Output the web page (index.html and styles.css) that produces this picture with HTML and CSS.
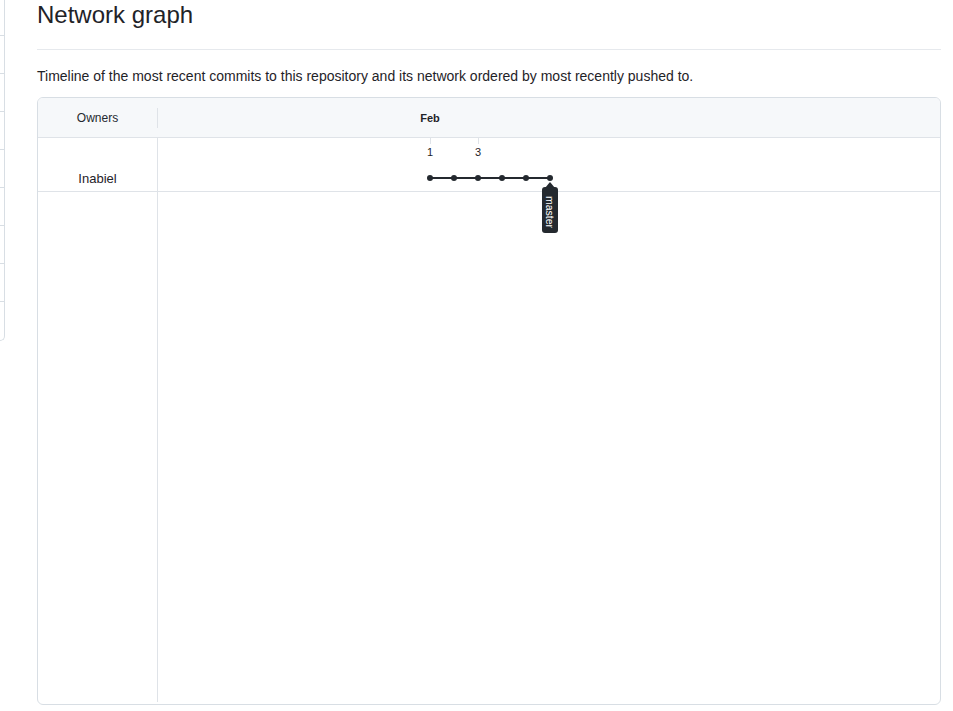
FILE: index.html
```html
<!DOCTYPE html>
<html lang="en">
<head>
<meta charset="utf-8">
<title>Network graph</title>
<link rel="stylesheet" href="styles.css">
</head>
<body>
<div class="page">
  <aside class="sidebar">
    <div class="side-item"></div>
    <div class="side-item"></div>
    <div class="side-item"></div>
    <div class="side-item"></div>
    <div class="side-item"></div>
    <div class="side-item"></div>
    <div class="side-item"></div>
    <div class="side-item"></div>
    <div class="side-item last"></div>
  </aside>
  <main class="main">
    <h2 class="title">Network graph</h2>
    <p class="lead">Timeline of the most recent commits to this repository and its network ordered by most recently pushed to.</p>
    <div class="network">
      <div class="net-header">
        <div class="owners-head"><span>Owners</span></div>
        <div class="months"><span class="month">Feb</span></div>
      </div>
      <div class="net-body">
        <div class="owner-row">
          <div class="owner-name">Inabiel</div>
          <div class="owner-lane"></div>
        </div>
        <div class="filler">
          <div class="filler-left"></div>
          <div class="filler-right"></div>
        </div>
        <svg class="graph" width="782" height="140" viewBox="0 0 782 140">
          <g stroke="#dfe3e8" stroke-width="1">
            <line x1="272.5" y1="0" x2="272.5" y2="6"/>
            <line x1="320.5" y1="0" x2="320.5" y2="6"/>
          </g>
          <g class="day" font-size="11" fill="#1f2328" text-anchor="middle">
            <text x="272" y="18">1</text>
            <text x="320" y="18">3</text>
          </g>
          <line x1="272" y1="40" x2="392" y2="40" stroke="#24292f" stroke-width="2"/>
          <g fill="#24292f">
            <circle cx="272" cy="40" r="3"/>
            <circle cx="296" cy="40" r="3"/>
            <circle cx="320" cy="40" r="3"/>
            <circle cx="344" cy="40" r="3"/>
            <circle cx="368" cy="40" r="3"/>
            <circle cx="392" cy="40" r="3"/>
            <path d="M387 50 L392 44 L397 50 Z"/>
            <rect x="384" y="49" width="16" height="46" rx="3"/>
          </g>
          <text class="branch" x="392" y="74" font-size="10.5" fill="#ffffff" text-anchor="middle" dominant-baseline="central" transform="rotate(90 392 74)">master</text>
        </svg>
      </div>
    </div>
  </main>
</div>
</body>
</html>
```

FILE: styles.css
```css
* {
  box-sizing: border-box;
}

html, body {
  margin: 0;
  padding: 0;
  background: #ffffff;
}

body {
  font-family: "Liberation Sans", Arial, Helvetica, sans-serif;
  color: #1f2328;
}

.page {
  display: flex;
  align-items: flex-start;
}

.sidebar {
  width: 5px;
  margin-top: -2px;
  border-right: 1px solid #d8dee4;
  border-bottom: 1px solid #d8dee4;
  border-bottom-right-radius: 6px;
  flex: none;
}

.side-item {
  height: 38px;
  border-bottom: 1px solid #d8dee4;
}

.side-item.last {
  border-bottom: none;
}

.main {
  margin-left: 32px;
  width: 904px;
  flex: none;
}

.title {
  margin: 0;
  font-size: 24px;
  font-weight: 400;
  line-height: 30px;
  padding-bottom: 19px;
  border-bottom: 1px solid #e6e9ed;
}

.lead {
  margin: 16px 0 10px;
  font-size: 14px;
  line-height: 21px;
}

.network {
  height: 608px;
  border: 1px solid #d8dee4;
  border-radius: 6px;
  overflow: hidden;
  display: flex;
  flex-direction: column;
}

.net-header {
  display: grid;
  grid-template-columns: 120px 1fr;
  height: 40px;
  background: #f6f8fa;
  border-bottom: 1px solid #dfe3e8;
  flex: none;
}

.owners-head {
  align-self: center;
  height: 20px;
  border-right: 1px solid #dfe3e8;
  display: flex;
  align-items: center;
  justify-content: center;
  font-size: 12px;
  color: #24292f;
}

.months {
  position: relative;
}

.month {
  position: absolute;
  left: 272px;
  top: 50%;
  transform: translate(-50%, -50%);
  font-size: 11px;
  font-weight: 700;
  color: #1f2328;
}

.net-body {
  position: relative;
  flex: 1;
  display: flex;
  flex-direction: column;
}

.owner-row {
  display: grid;
  grid-template-columns: 120px 1fr;
  height: 54px;
  border-bottom: 1px solid #dfe3e8;
}

.owner-name {
  border-right: 1px solid #dfe3e8;
  display: flex;
  align-items: flex-end;
  justify-content: center;
  padding-bottom: 4px;
  font-size: 13px;
  line-height: 16px;
}

.filler {
  flex: 1;
  display: grid;
  grid-template-columns: 120px 1fr;
  padding-bottom: 2px;
}

.filler-left {
  border-right: 1px solid #dfe3e8;
}

.graph {
  position: absolute;
  left: 120px;
  top: 0;
  overflow: visible;
}

.graph text {
  font-family: "Liberation Sans", Arial, Helvetica, sans-serif;
}
```
